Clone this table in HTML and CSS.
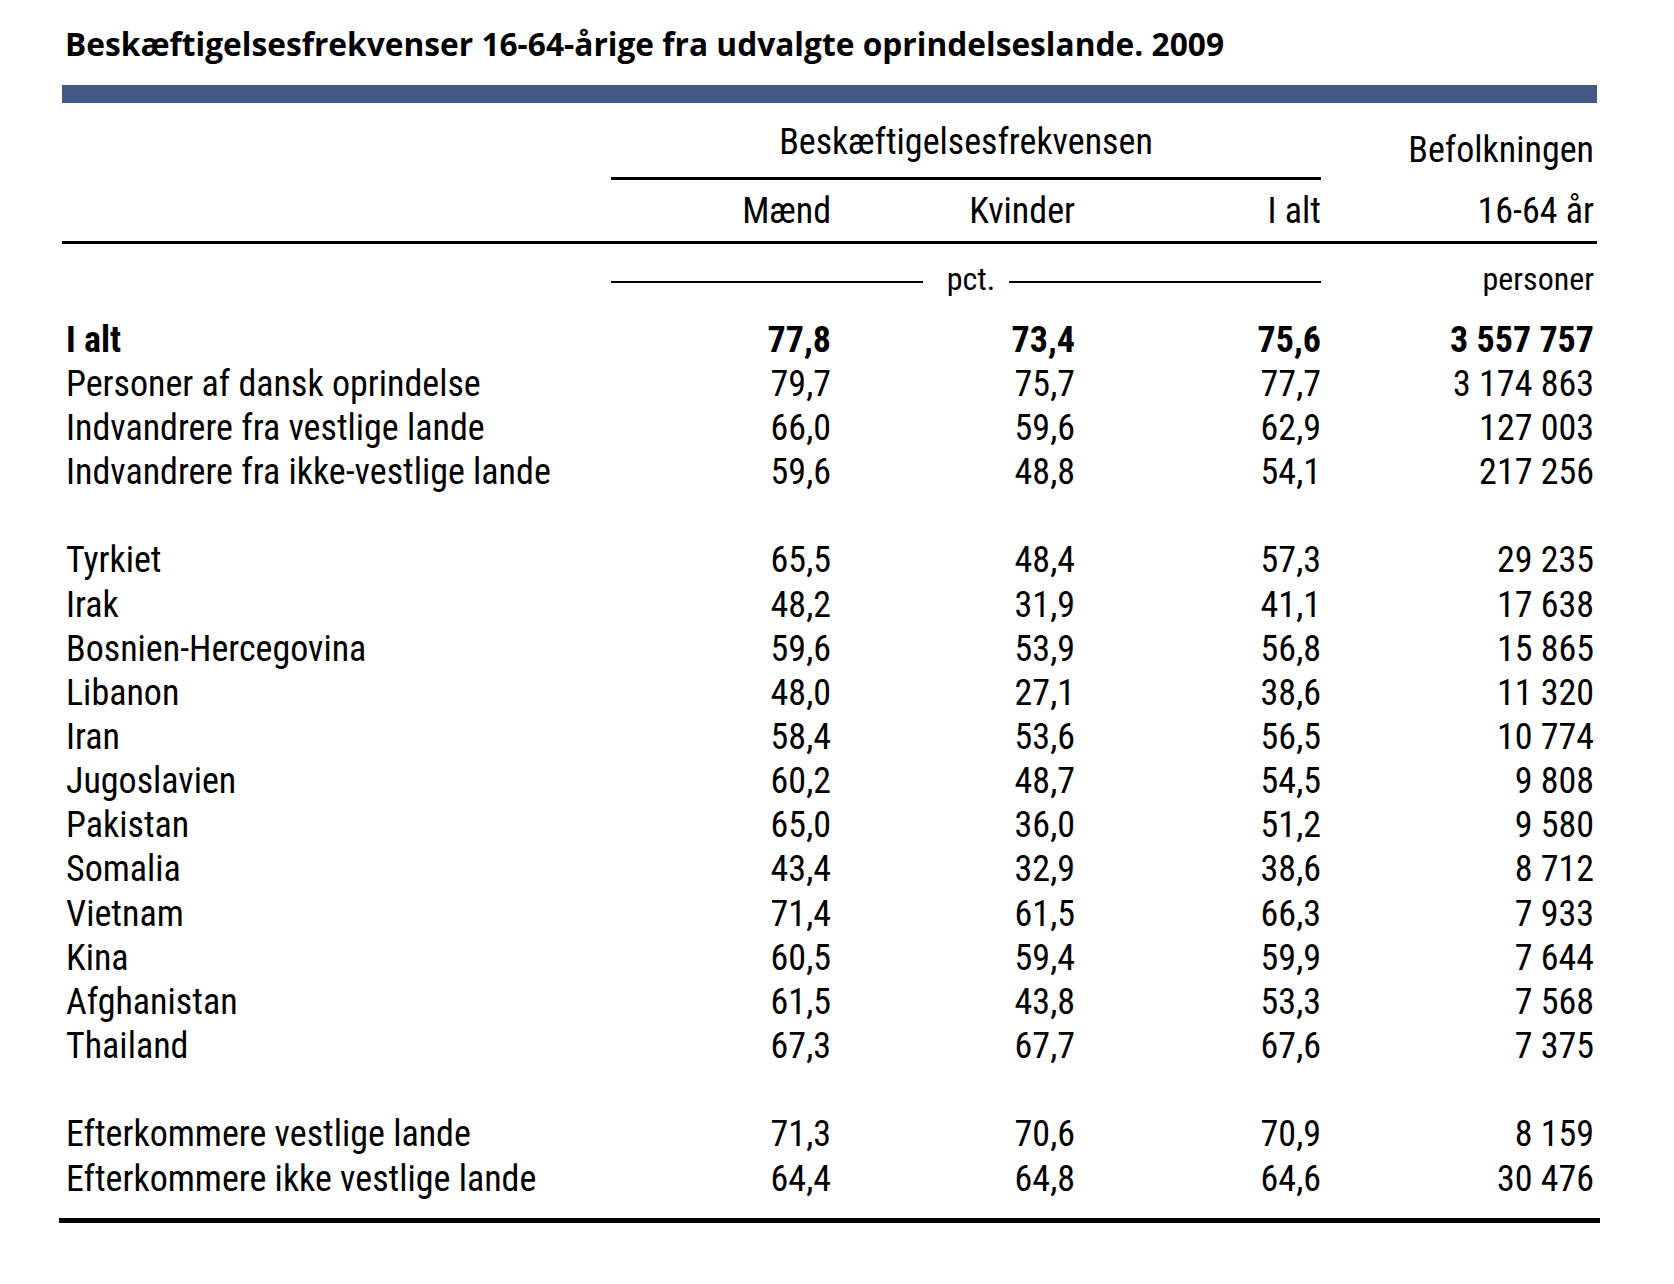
FILE: index.html
```html
<!DOCTYPE html>
<html lang="da">
<head>
<meta charset="utf-8">
<title>Beskæftigelsesfrekvenser</title>
<link rel="stylesheet" href="styles.css">
</head>
<body>
<div class="page">
  <h1 class="title">Beskæftigelsesfrekvenser 16-64-årige fra udvalgte oprindelseslande. 2009</h1>
  <div class="bar"></div>

  <div class="head">
    <div class="hcell spanner">Beskæftigelsesfrekvensen</div>
    <div class="hcell pop">Befolkningen</div>
    <div class="hcell sub num c2">Mænd</div>
    <div class="hcell sub num c3">Kvinder</div>
    <div class="hcell sub num c4">I alt</div>
    <div class="hcell sub num c5 last">16-64 år</div>
  </div>

  <div class="units">
    <div class="pct"><span class="rule"></span><span class="unit">pct.</span><span class="rule"></span></div>
    <div class="unit num last">personer</div>
  </div>

  <div class="body">
    <div class="row total"><div class="lbl">I alt</div><div class="num">77,8</div><div class="num">73,4</div><div class="num">75,6</div><div class="num last">3 557 757</div></div>
    <div class="row"><div class="lbl">Personer af dansk oprindelse</div><div class="num">79,7</div><div class="num">75,7</div><div class="num">77,7</div><div class="num last">3 174 863</div></div>
    <div class="row"><div class="lbl">Indvandrere fra vestlige lande</div><div class="num">66,0</div><div class="num">59,6</div><div class="num">62,9</div><div class="num last">127 003</div></div>
    <div class="row"><div class="lbl">Indvandrere fra ikke-vestlige lande</div><div class="num">59,6</div><div class="num">48,8</div><div class="num">54,1</div><div class="num last">217 256</div></div>
    <div class="row blank"></div>
    <div class="row"><div class="lbl">Tyrkiet</div><div class="num">65,5</div><div class="num">48,4</div><div class="num">57,3</div><div class="num last">29 235</div></div>
    <div class="row"><div class="lbl">Irak</div><div class="num">48,2</div><div class="num">31,9</div><div class="num">41,1</div><div class="num last">17 638</div></div>
    <div class="row"><div class="lbl">Bosnien-Hercegovina</div><div class="num">59,6</div><div class="num">53,9</div><div class="num">56,8</div><div class="num last">15 865</div></div>
    <div class="row"><div class="lbl">Libanon</div><div class="num">48,0</div><div class="num">27,1</div><div class="num">38,6</div><div class="num last">11 320</div></div>
    <div class="row"><div class="lbl">Iran</div><div class="num">58,4</div><div class="num">53,6</div><div class="num">56,5</div><div class="num last">10 774</div></div>
    <div class="row"><div class="lbl">Jugoslavien</div><div class="num">60,2</div><div class="num">48,7</div><div class="num">54,5</div><div class="num last">9 808</div></div>
    <div class="row"><div class="lbl">Pakistan</div><div class="num">65,0</div><div class="num">36,0</div><div class="num">51,2</div><div class="num last">9 580</div></div>
    <div class="row"><div class="lbl">Somalia</div><div class="num">43,4</div><div class="num">32,9</div><div class="num">38,6</div><div class="num last">8 712</div></div>
    <div class="row"><div class="lbl">Vietnam</div><div class="num">71,4</div><div class="num">61,5</div><div class="num">66,3</div><div class="num last">7 933</div></div>
    <div class="row"><div class="lbl">Kina</div><div class="num">60,5</div><div class="num">59,4</div><div class="num">59,9</div><div class="num last">7 644</div></div>
    <div class="row"><div class="lbl">Afghanistan</div><div class="num">61,5</div><div class="num">43,8</div><div class="num">53,3</div><div class="num last">7 568</div></div>
    <div class="row"><div class="lbl">Thailand</div><div class="num">67,3</div><div class="num">67,7</div><div class="num">67,6</div><div class="num last">7 375</div></div>
    <div class="row blank"></div>
    <div class="row"><div class="lbl">Efterkommere vestlige lande</div><div class="num">71,3</div><div class="num">70,6</div><div class="num">70,9</div><div class="num last">8 159</div></div>
    <div class="row"><div class="lbl">Efterkommere ikke vestlige lande</div><div class="num">64,4</div><div class="num">64,8</div><div class="num">64,6</div><div class="num last">30 476</div></div>
  </div>
  <div class="endrule"></div>
</div>
</body>
</html>
```
FILE: styles.css
```css
html, body {
  margin: 0;
  padding: 0;
  background: #ffffff;
  color: #000000;
}

body {
  font-family: "Roboto Condensed", "Liberation Sans Narrow", "Liberation Sans", sans-serif;
  font-size: 36px;
}

.page {
  margin-left: 62px;
  width: 1535px;
  padding-top: 22px;
}

.title {
  margin: 0;
  padding-left: 3px;
  font-family: "Open Sans", "Liberation Sans", sans-serif;
  font-weight: 700;
  font-size: 31.7px;
  line-height: 44px;
  height: 44px;
  white-space: nowrap;
}

.bar {
  margin-top: 19px;
  height: 18px;
  background: #445a85;
}

/* ---------- header ---------- */
.head {
  display: grid;
  grid-template-columns: 549px 220px 244px 246px 276px;
  grid-template-rows: 77px 61px;
  border-bottom: 3px solid #000;
  line-height: 44px;
}

.hcell {
  white-space: nowrap;
  box-sizing: border-box;
}

.spanner {
  grid-column: 2 / 5;
  grid-row: 1;
  text-align: center;
  padding-top: 17px;
  border-bottom: 3px solid #000;
}

.pop {
  grid-column: 5;
  grid-row: 1;
  text-align: right;
  padding-top: 25px;
  padding-right: 3px;
}

.sub {
  grid-row: 2;
  padding-top: 9px;
}

.c2 { grid-column: 2; }
.c3 { grid-column: 3; }
.c4 { grid-column: 4; }
.c5 { grid-column: 5; }

.num {
  text-align: right;
  white-space: nowrap;
}

.last {
  padding-right: 3px;
}

/* ---------- units row ---------- */
.units {
  display: grid;
  grid-template-columns: 549px 710px 276px;
  height: 73.6px;
  box-sizing: border-box;
  padding-top: 17px;
  font-size: 32px;
  line-height: 36px;
}

.pct {
  grid-column: 2;
  display: flex;
  align-items: flex-start;
  gap: 14px;
}

.pct .unit {
  margin-left: 10px;
}

.pct .rule {
  flex: 1;
  height: 2px;
  margin-top: 20px;
  background: #000;
}

.units .last {
  grid-column: 3;
}

/* ---------- body rows ---------- */
.row {
  display: grid;
  grid-template-columns: 549px 220px 244px 246px 276px;
  height: 44.16px;
  line-height: 44.16px;
}

.lbl {
  padding-left: 4px;
  white-space: nowrap;
}

.total {
  font-weight: 700;
}

.endrule {
  margin: 17px -3px 0 -3px;
  height: 5px;
  background: #000;
}
```
